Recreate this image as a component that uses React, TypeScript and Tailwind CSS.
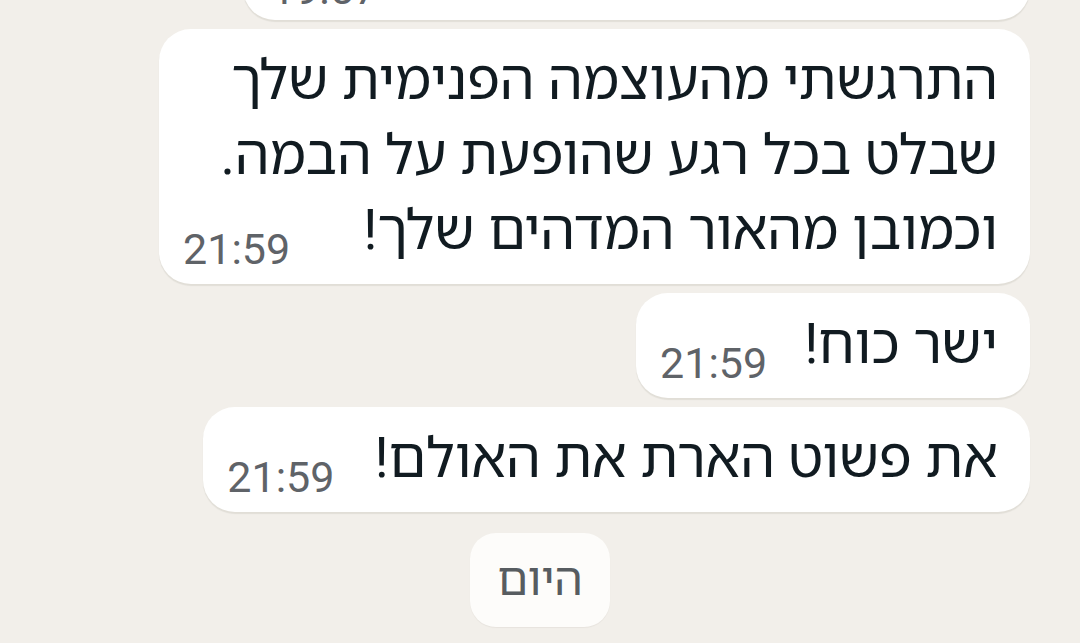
import React from 'react'

type Msg = {
  lines: string[]
  time: string
  gap: string
}

const messages: Msg[] = [
  {
    lines: ['התרגשתי מהעוצמה הפנימית שלך', 'שבלט בכל רגע שהופעת על הבמה.', 'וכמובן מהאור המדהים שלך!'],
    time: '21:59',
    gap: 'gap-[73px]',
  },
  { lines: ['ישר כוח!'], time: '21:59', gap: 'gap-[37px]' },
  { lines: ['את פשוט הארת את האולם!'], time: '21:59', gap: 'gap-[40px]' },
]

function Time({ value }: { value: string }) {
  return (
    <span dir="ltr" className="mb-[-3px] font-['Roboto',sans-serif] text-[43px] leading-none text-[#5f6368]">
      {value}
    </span>
  )
}

function Bubble({ lines, time, gap }: Msg) {
  const head = lines.slice(0, -1)
  const last = lines[lines.length - 1]
  return (
    <div className="rounded-[32px] bg-white pt-[14px] pb-[16px] pr-[32px] pl-[24px] shadow-[0_2px_1px_rgba(60,50,30,0.09)]">
      {head.map((l) => (
        <div key={l} className="text-[55px] leading-[75px] text-[#111b21]">
          {l}
        </div>
      ))}
      <div className={`flex items-end justify-between ${gap}`}>
        <span className="text-[55px] leading-[75px] text-[#111b21]">{last}</span>
        <Time value={time} />
      </div>
    </div>
  )
}

export default function App() {
  return (
    <div
      dir="rtl"
      className="h-[643px] w-[1080px] overflow-hidden bg-[#f2efea] font-['Roboto','Noto_Sans_Hebrew','Liberation_Sans','DejaVu_Sans',sans-serif]"
    >
      <div className="-mt-[87px] flex flex-col items-start gap-[9px] pr-[50px]">
        {/* earlier message, scrolled mostly out of view */}
        <div className="flex h-[107px] w-[787px] items-end justify-end rounded-[32px] bg-white pb-[12px] pl-[28px] shadow-[0_2px_1px_rgba(60,50,30,0.09)]">
          <Time value="19:57" />
        </div>
        {messages.map((m, i) => (
          <Bubble key={i} {...m} />
        ))}
        <div className="mt-[12px] flex w-full justify-center pl-[50px]">
          <div className="flex h-[94px] items-center rounded-[26px] bg-[#fdfcfa] px-[27px] text-[45px] text-[#575c60] shadow-[0_1px_1px_rgba(60,50,30,0.06)]">
            היום
          </div>
        </div>
      </div>
    </div>
  )
}
